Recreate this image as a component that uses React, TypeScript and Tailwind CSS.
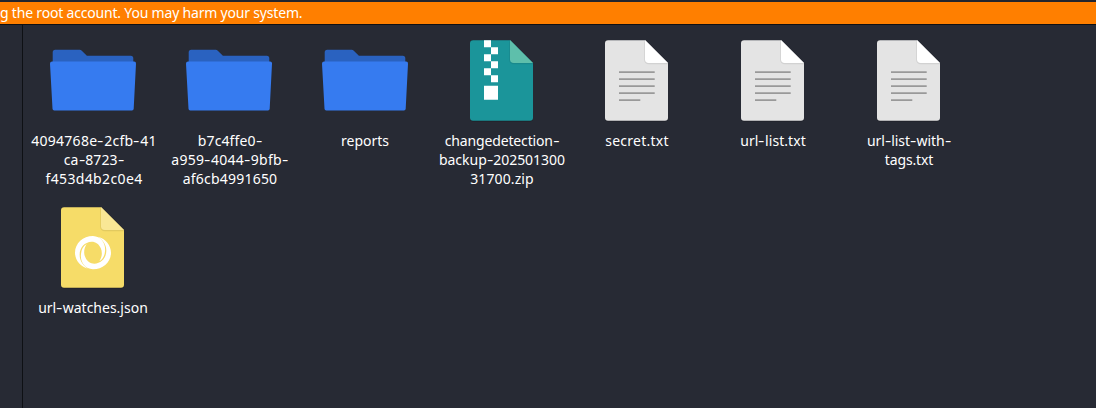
import type { ReactNode } from 'react';

type Kind = 'folder' | 'zip' | 'text' | 'json';

interface Line {
  text: string;
  tracking: string;
}

interface Item {
  kind: Kind;
  lines: Line[];
}

const items: Item[] = [
  {
    kind: 'folder',
    lines: [
      { text: '4094768e-2cfb-41', tracking: 'tracking-[0.28px]' },
      { text: 'ca-8723-', tracking: 'tracking-[0.1px]' },
      { text: 'f453d4b2c0e4', tracking: 'tracking-[0.36px]' },
    ],
  },
  {
    kind: 'folder',
    lines: [
      { text: 'b7c4ffe0-', tracking: 'tracking-[0.1px]' },
      { text: 'a959-4044-9bfb-', tracking: 'tracking-[0.25px]' },
      { text: 'af6cb4991650', tracking: 'tracking-[0.22px]' },
    ],
  },
  { kind: 'folder', lines: [{ text: 'reports', tracking: 'tracking-normal' }] },
  {
    kind: 'zip',
    lines: [
      { text: 'changedetection-', tracking: 'tracking-[-0.15px]' },
      { text: 'backup-202501300', tracking: 'tracking-[-0.03px]' },
      { text: '31700.zip', tracking: 'tracking-[0.1px]' },
    ],
  },
  { kind: 'text', lines: [{ text: 'secret.txt', tracking: 'tracking-[0.24px]' }] },
  { kind: 'text', lines: [{ text: 'url-list.txt', tracking: 'tracking-[0.06px]' }] },
  {
    kind: 'text',
    lines: [
      { text: 'url-list-with-', tracking: 'tracking-[-0.05px]' },
      { text: 'tags.txt', tracking: 'tracking-[-0.15px]' },
    ],
  },
  { kind: 'json', lines: [{ text: 'url-watches.json', tracking: 'tracking-normal' }] },
];

const swirlArm =
  'M45 104C22 98 6 78 6 56C6 28 30 6 60 6C86 7 99 30 96 52C95 66 89 76 79 82C87 70 89 54 83 42C78 30 68 23 56 23C35 24 20 40 20 62C20 80 30 94 45 104z';

function Page({ fill, fold, children }: { fill: string; fold: string; children: ReactNode }) {
  return (
    <>
      <path d="M39 16H76L99 38.3V93.5a3 3 0 0 1-3 3H39a3 3 0 0 1-3-3V18a3 3 0 0 1 3-3z" fill="#000" opacity=".25" />
      <path d="M39 15.3H76L99 37.9V92.7a3 3 0 0 1-3 3H39a3 3 0 0 1-3-3V18.3a3 3 0 0 1 3-3z" fill={fill} />
      <path d="M75.2 16V35a4.3 4.3 0 0 0 4.3 4.3H99V37.7z" fill="#000" opacity=".08" />
      <path d="M76.3 15.3H76V34.2a3.8 3.8 0 0 0 3.8 3.8H99z" fill={fold} />
      {children}
    </>
  );
}

function Icon({ kind }: { kind: Kind }) {
  return (
    <svg viewBox="0 0 136 106" className="block h-[106px] w-[136px]" aria-hidden="true">
      {kind === 'folder' && (
        <>
          <path d="M27.7 27.3a2.5 2.5 0 0 1 2.5-2.5H54.6a3 3 0 0 1 2.2.9L61.9 30.8H105.8a2.5 2.5 0 0 1 2.5 2.5V60H27.7z" fill="#2a62c0" />
          <path d="M27.5 36.5H109a2 2 0 0 1 2 2.2L108.7 83.7a1.8 1.8 0 0 1-1.8 1.7H29.3A1.8 1.8 0 0 1 27.5 83.7L25 38.8A2.3 2.3 0 0 1 27.5 36.5z" fill="#367bf0" />
        </>
      )}
      {kind === 'zip' && (
        <g transform="translate(1)">
          <Page fill="#1b959a" fold="#5ebfab">
            <path d="M50 15.3h7v7h-7zM57 22.3h7v7h-7zM50 29.3h7v7h-7zM57 36.3h7v7h-7zM50 43.3h7v7h-7zM57 50.3h7v7h-7zM50 60.7h14v14h-14z" fill="#fff" />
          </Page>
        </g>
      )}
      {kind === 'text' && (
        <Page fill="#e4e4e4" fold="#ffffff">
          <path d="M50 47.2H85.7M50 54.2H85.7M50 61.2H85.7M50 68.2H85.7M50 75.2H71.3" stroke="#999" strokeWidth="1.8" />
        </Page>
      )}
      {kind === 'json' && (
        <Page fill="#f6dc68" fold="#f9e795">
          <g fill="#fff" transform="translate(48 42) scale(0.3333)">
            <path d={swirlArm} />
            <path d={swirlArm} transform="rotate(180 60 56)" />
          </g>
        </Page>
      )}
    </svg>
  );
}

function Label({ text, tracking }: Line) {
  return (
    <span className={`whitespace-nowrap ${tracking}`}>
      {text.split(/(-)/).map((part, i) =>
        part === '-' ? (
          <span key={i} className="mx-px inline-block scale-x-140">
            -
          </span>
        ) : (
          part
        ),
      )}
    </span>
  );
}

export default function App() {
  return (
    <div className="flex h-[408px] w-[1096px] flex-col overflow-hidden bg-[#272a34] text-[14px] leading-[19px] [font-family:'Noto_Sans',sans-serif]">
      <div className="h-[2px] shrink-0 bg-[#23252e]" />
      <header className="h-[23px] shrink-0 border-b border-[#0e1014] bg-[#ff7f00] pt-px tracking-[-0.19px] whitespace-nowrap text-white">
        g the root account. You may harm your system.
      </header>
      <div className="flex min-h-0 flex-1">
        <aside className="w-[23px] shrink-0 border-r border-[#0e1014]" />
        <main className="grid flex-1 auto-rows-[167px] grid-cols-[repeat(7,136px)] content-start pl-[2px]">
          {items.map((item) => (
            <figure key={item.lines[0].text} className="flex flex-col items-center">
              <Icon kind={item.kind} />
              <figcaption
                className={`flex flex-col items-center text-white ${item.lines.length > 2 ? 'pl-[2px]' : 'pl-0'}`}
              >
                {item.lines.map((line) => (
                  <Label key={line.text} {...line} />
                ))}
              </figcaption>
            </figure>
          ))}
        </main>
      </div>
    </div>
  );
}
